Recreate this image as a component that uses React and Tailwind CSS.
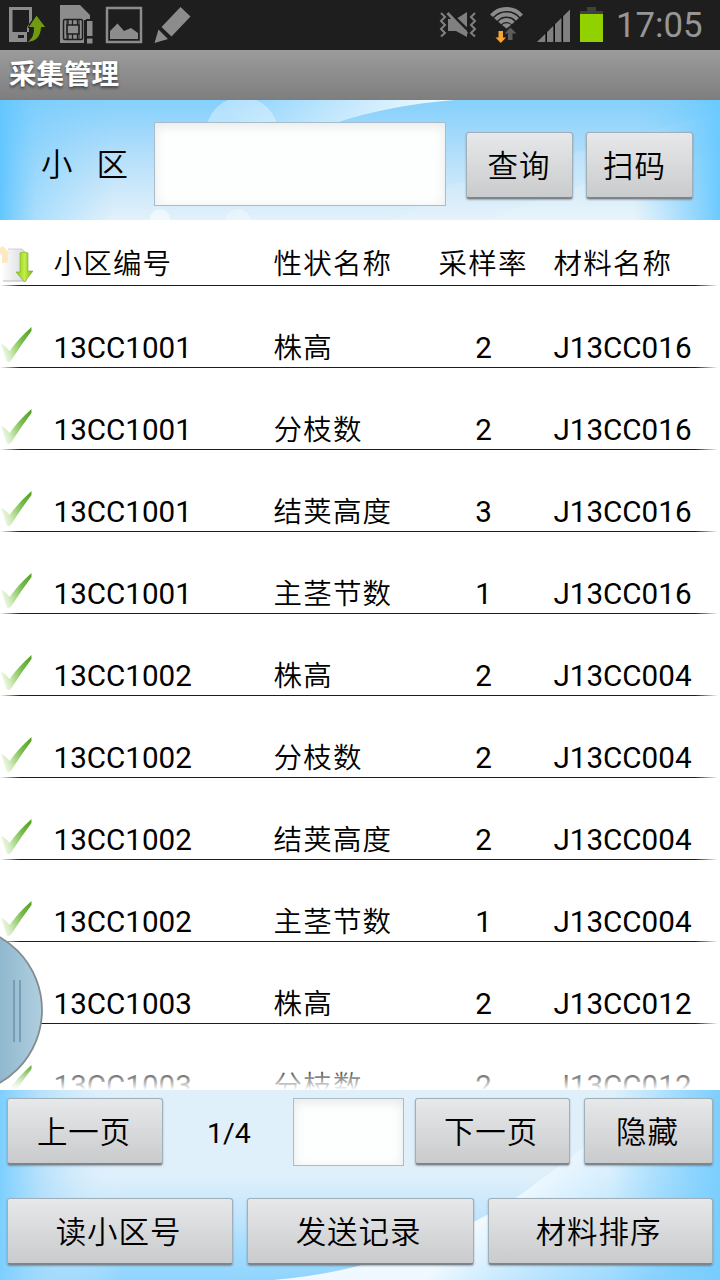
import React from 'react';

const records = [
  { id: '13CC1001', trait: '株高', rate: 2, material: 'J13CC016' },
  { id: '13CC1001', trait: '分枝数', rate: 2, material: 'J13CC016' },
  { id: '13CC1001', trait: '结荚高度', rate: 3, material: 'J13CC016' },
  { id: '13CC1001', trait: '主茎节数', rate: 1, material: 'J13CC016' },
  { id: '13CC1002', trait: '株高', rate: 2, material: 'J13CC004' },
  { id: '13CC1002', trait: '分枝数', rate: 2, material: 'J13CC004' },
  { id: '13CC1002', trait: '结荚高度', rate: 2, material: 'J13CC004' },
  { id: '13CC1002', trait: '主茎节数', rate: 1, material: 'J13CC004' },
  { id: '13CC1003', trait: '株高', rate: 2, material: 'J13CC012' },
  { id: '13CC1003', trait: '分枝数', rate: 2, material: 'J13CC012' },
];

const StatusBar = () => (
  <div className="h-[50px] shrink-0 bg-[#1e1e1e] flex items-center justify-between overflow-hidden">
    <svg width="200" height="50" viewBox="0 0 200 50" fill="#8c8c8c">
      {/* Phone with transfer arrow */}
      <path fillRule="evenodd" d="M9 7H32V20L27 27V42H9ZM12.500 10V32H29V10ZM18 35V38H24V35Z" />
      <path d="M36.500 15L46 27.500H41.500C41 36 37 42 26.500 42.500C32 39 33.500 34 33.500 27.500H28Z" fill="#6f9a12" stroke="#1e1e1e" strokeWidth="1" />
      {/* SIM card */}
      <path d="M60 5H80L90 15V19H86V43H60Z" />
      <rect x="63.500" y="19.500" width="19" height="20" rx="1.500" fill="#8c8c8c" stroke="#1e1e1e" strokeWidth="1.500" />
      <path d="M68 20V25M72.500 20V25M77.500 20V25M68 34V39M72.500 34V39M77.500 34V39M67 25H79V34H67Z" fill="none" stroke="#1e1e1e" strokeWidth="1.300" />
      <path d="M67 20V39M79 20V39" stroke="#1e1e1e" strokeWidth="1" />
      <path d="M84 20H94V45H84Z" fill="#1e1e1e" />
      <path d="M87 21H92.500V36H87ZM87 38.500H92.500V43.500H87Z" />
      {/* Picture */}
      <rect x="107" y="8" width="34" height="34" fill="none" stroke="#8c8c8c" strokeWidth="2.500" />
      <path d="M110 31L117.500 23.500L124 31L131 28L138 33V39H110Z" />
      {/* Pencil */}
      <path d="M180.500 7L190.500 16.500L171.500 36.500L161.500 27ZM158.500 29.500L168 39L154.500 43Z" />
    </svg>
    <div className="flex items-center h-[50px]">
      <svg width="190" height="50" viewBox="430 0 190 50" fill="#808080">
        {/* Vibrate */}
        <path d="M448 19H456L467 12V37L456 31H448Z" />
        <path d="M447 10L470 32" stroke="#1e1e1e" strokeWidth="2.500" />
        <path d="M447.500 13L467 34" stroke="#808080" strokeWidth="3" />
        <path d="M441 13L445 17L441 21L445 25L441 29L445 33L441 36.500M475 13L471 17L475 21L471 25L475 29L471 33L475 36.500" fill="none" stroke="#808080" strokeWidth="2" />
        {/* Wifi */}
        <g fill="none" stroke="#8c8c8c" strokeWidth="4">
          <path d="M491.500 15.800A20 20 0 0 1 521.500 15.800" />
          <path d="M495.600 19.400A14.500 14.500 0 0 1 517.400 19.400" />
          <path d="M499.800 23A9 9 0 0 1 513.200 23" />
        </g>
        <path d="M502 25A6.500 6.500 0 0 1 511 25L506.500 28.500Z" fill="#8c8c8c" />
        <path d="M498.500 31H503V37.500H506L500.800 43L495.500 37.500H498.500Z" fill="#f9a330" />
        <path d="M508 40H512.500V33.500H516.500L510.500 27.500L504.500 33.500H508Z" fill="#5c5c5c" />
        {/* Signal */}
        <path d="M537 42L570 9.500V42Z" />
        <path d="M546.200 32V42M554.200 24V42M562.300 16V42" stroke="#0c0c0c" strokeWidth="1.600" />
        {/* Battery */}
        <path d="M580 14V11H587V7H596V11H603V14Z" fill="#404040" />
        <path d="M580 14H603V42H580Z" fill="#92d000" />
      </svg>
      <span className="w-[104px] -ml-[4px] text-[34.8px] leading-[50px] text-[#969696] whitespace-nowrap">17:05</span>
    </div>
  </div>
);

const SearchBackground = () => (
  <svg className="absolute inset-0" width="720" height="120" viewBox="0 0 720 120">
    <defs>
      <linearGradient id="skyTop" x1="0" y1="0" x2="0" y2="1">
        <stop offset="0" stopColor="#84d0fc" />
        <stop offset="0.500" stopColor="#b8e0fa" />
        <stop offset="1" stopColor="#e2f1fa" />
      </linearGradient>
      <linearGradient id="skySides">
        <stop offset="0" stopColor="#62c6ff" />
        <stop offset="0.050" stopColor="#74ccff" stopOpacity="0.500" />
        <stop offset="0.160" stopColor="#84d0fc" stopOpacity="0" />
        <stop offset="0.880" stopColor="#84d0fc" stopOpacity="0" />
        <stop offset="1" stopColor="#6acaff" />
      </linearGradient>
      <linearGradient id="ray" x1="0" y1="0" x2="1" y2="0">
        <stop offset="0" stopColor="#fff" stopOpacity="0" />
        <stop offset="0.700" stopColor="#fff" stopOpacity="0.650" />
        <stop offset="1" stopColor="#fff" stopOpacity="0.900" />
      </linearGradient>
    </defs>
    <rect width="720" height="120" fill="url(#skyTop)" />
    <path d="M220 0H455Q390 5 335 23H240Z" fill="url(#ray)" />
    <path d="M390 120Q430 105 446 86Q560 60 720 10V120Z" fill="#fff" fillOpacity="0.120" />
    <path d="M490 120Q560 85 720 50V120Z" fill="#fff" fillOpacity="0.150" />
    <circle cx="242" cy="33" r="36" fill="#fff" fillOpacity="0.350" />
    <circle cx="160" cy="119" r="10" fill="#fff" fillOpacity="0.500" />
    <circle cx="238" cy="122" r="13" fill="#fff" fillOpacity="0.300" />
    <rect width="720" height="120" fill="url(#skySides)" />
  </svg>
);

const FooterBackground = () => (
  <svg className="absolute inset-0" width="720" height="190" viewBox="0 0 720 190">
    <defs>
      <linearGradient id="footLeft">
        <stop offset="0" stopColor="#7ccfff" />
        <stop offset="0.060" stopColor="#a8dcfc" stopOpacity="0.700" />
        <stop offset="0.170" stopColor="#e0f0fb" stopOpacity="0" />
      </linearGradient>
      <linearGradient id="footRight">
        <stop offset="0.850" stopColor="#74ccff" stopOpacity="0" />
        <stop offset="1" stopColor="#74ccff" stopOpacity="0.900" />
      </linearGradient>
      <linearGradient id="footBottom" x1="0" y1="0" x2="0" y2="1">
        <stop offset="0.450" stopColor="#8fd4ff" stopOpacity="0" />
        <stop offset="1" stopColor="#8fd4ff" />
      </linearGradient>
      <linearGradient id="footBeam" gradientUnits="userSpaceOnUse" x1="500" y1="100" x2="640" y2="220">
        <stop offset="0" stopColor="#fff" stopOpacity="0.850" />
        <stop offset="1" stopColor="#8fd4ff" stopOpacity="0.500" />
      </linearGradient>
    </defs>
    <rect width="720" height="190" fill="#e0f0fb" />
    <rect width="720" height="190" fill="url(#footBottom)" />
    <rect width="720" height="190" fill="url(#footLeft)" />
    <path d="M655 0Q590 55 516 108Q400 180 273 190H720V0Z" fill="url(#footBeam)" />
    <rect width="720" height="190" fill="url(#footRight)" />
  </svg>
);

const Button = ({ className, children }) => (
  <button
    className={`h-[67px] shrink-0 rounded-[3px] border border-[#9fb0ba] border-b-2 border-b-[#7b858b] bg-linear-to-b from-[#e6e8e9] to-[#c9cbcc] pt-[3px] text-[30.5px] tracking-[0.9px] leading-[58px] font-[350] text-black whitespace-nowrap shadow-[0_1px_2px_rgba(0,0,0,0.3)] ${className}`}
  >
    {children}
  </button>
);

const Input = ({ className }) => (
  <input
    className={`shrink-0 border border-[#a9bccb] bg-[#fdfefe] outline-none shadow-[inset_0_3px_12px_rgba(0,0,0,0.09)] ${className}`}
  />
);

const Line = () => (
  <div className="absolute left-0 bottom-0 w-[720px] h-px bg-[linear-gradient(to_right,transparent,#1c1c1c_20px,#1c1c1c_695px,transparent_718px)]" />
);

const CheckIcon = () => (
  <svg className="-mt-[3px] mb-[3px]" width="34" height="40" viewBox="0 0 34 40">
    <defs>
      <linearGradient id="check" x1="0" y1="0.600" x2="1" y2="0.200">
        <stop offset="0" stopColor="#e2f2d6" stopOpacity="0.600" />
        <stop offset="0.350" stopColor="#b2dc92" />
        <stop offset="0.700" stopColor="#74b84a" />
        <stop offset="1" stopColor="#57a524" />
      </linearGradient>
    </defs>
    <path d="M1 21Q5 22 9.500 28Q19 15 31.500 4V8Q21 22 11.500 37Q8.500 41 6.500 38Q4 30 1 21Z" fill="url(#check)" />
  </svg>
);

const SyncIcon = () => (
  <svg className="mt-[2px] -mb-[2px]" width="34" height="40" viewBox="0 0 34 40">
    <defs>
      <linearGradient id="paper" x1="0" y1="0" x2="1" y2="0">
        <stop offset="0" stopColor="#fcfcfc" />
        <stop offset="1" stopColor="#d5d8dc" />
      </linearGradient>
      <linearGradient id="down">
        <stop offset="0" stopColor="#83c814" />
        <stop offset="0.500" stopColor="#c5ec4b" />
        <stop offset="1" stopColor="#6db30e" />
      </linearGradient>
    </defs>
    <path d="M8 4H22L27 9V36H3V12Z" fill="url(#paper)" />
    <path d="M8 4H22L27 9" fill="none" stroke="#c8c8c8" strokeWidth="0.800" />
    <path d="M3 36H26" stroke="#b8b8b8" strokeWidth="1" />
    <path d="M0 3L3 1L10 9H8V18H2V9H0Z" fill="#fde8c2" />
    <path d="M20 8Q24 6 28 8V26H33L24.500 37L16 27H20Z" fill="url(#down)" stroke="#7aae20" strokeWidth="0.600" />
  </svg>
);

const Row = ({ record }) => (
  <div className="relative h-[82px] pb-[2px] shrink-0 flex items-end text-[29.6px] leading-[36px] text-black whitespace-nowrap">
    <div className="w-[53.500px]">
      <CheckIcon />
    </div>
    <div className="w-[220px]">{record.id}</div>
    <div className="w-[165px] -mb-px text-[28.5px] tracking-[1.200px] font-[350]">{record.trait}</div>
    <div className="w-[90px] text-center">{record.rate}</div>
    <div className="ml-[25px]">{record.material}</div>
    <Line />
  </div>
);

const HeaderRow = () => (
  <div className="relative h-[66px] pb-[3px] shrink-0 flex items-end text-[28.5px] tracking-[1.200px] leading-[36px] font-[350] text-black whitespace-nowrap">
    <div className="w-[53.500px]">
      <SyncIcon />
    </div>
    <div className="w-[220px]">小区编号</div>
    <div className="w-[165px]">性状名称</div>
    <div className="w-[115px]">采样率</div>
    <div>材料名称</div>
    <Line />
  </div>
);

export default function App() {
  return (
    <div className="w-[720px] h-[1280px] flex flex-col overflow-hidden bg-white font-[Roboto,'Noto_Sans_CJK_SC',sans-serif]">
      <StatusBar />

      <header className="h-[50px] shrink-0 bg-linear-to-b from-[#9c9c9c] to-[#7e7e7e] px-[9px] text-[27.5px] leading-[50px] font-bold text-white [text-shadow:0_2px_3px_rgba(0,0,0,0.5)]">
        采集管理
      </header>

      {/* Search */}
      <section className="relative h-[120px] shrink-0">
        <SearchBackground />
        <div className="relative flex items-start pt-[22px]">
          <div className="w-[154px] pl-[41px] flex gap-[24px] text-[31.5px] leading-[88px] font-[350]">
            <span>小</span>
            <span>区</span>
          </div>
          <Input className="w-[292px] h-[84px]" />
          <Button className="mt-[10px] ml-[20px] w-[107px] pr-[1px]">查询</Button>
          <Button className="mt-[10px] ml-[13px] w-[107px] pr-[10px]">扫码</Button>
        </div>
      </section>

      {/* Records */}
      <main className="relative flex-1 flex flex-col min-h-0 overflow-hidden">
        <HeaderRow />
        {records.map((r, i) => (
          <Row key={i} record={r} />
        ))}
        <div className="absolute inset-x-0 bottom-0 h-[24px] bg-linear-to-b from-white/10 to-white" />
        <svg className="absolute left-0 bottom-0" width="50" height="160" viewBox="0 0 50 160">
          <defs>
            <linearGradient id="handle" gradientUnits="userSpaceOnUse" x1="0" y1="0" x2="42" y2="0">
              <stop offset="0" stopColor="#90b8ce" />
              <stop offset="1" stopColor="#b0cfe0" />
            </linearGradient>
          </defs>
          <circle cx="-42" cy="80" r="84" fill="url(#handle)" stroke="#858c90" strokeWidth="1.800" />
          <path d="M14 50V112M20 50V112" stroke="#7599ae" strokeWidth="1.800" />
        </svg>
      </main>

      {/* Paging and actions */}
      <footer className="relative h-[190px] shrink-0">
        <FooterBackground />
        <div className="relative flex flex-col gap-[33px] pt-[8px] pl-[7px]">
          <div className="flex h-[67px]">
            <Button className="w-[156px] pr-[2px]">上一页</Button>
            <span className="w-[130px] text-center text-[28.5px] leading-[71px] pl-[2px]">1/4</span>
            <Input className="w-[111px] h-[68px]" />
            <Button className="ml-[11px] w-[155px] pr-[3px]">下一页</Button>
            <Button className="ml-[14px] w-[129px] pr-[2px]">隐藏</Button>
          </div>
          <div className="flex gap-[14px]">
            <Button className="w-[226px] pr-[3px]">读小区号</Button>
            <Button className="w-[227px] pr-[4px]">发送记录</Button>
            <Button className="w-[225px] pr-[4px]">材料排序</Button>
          </div>
        </div>
      </footer>
    </div>
  );
}
